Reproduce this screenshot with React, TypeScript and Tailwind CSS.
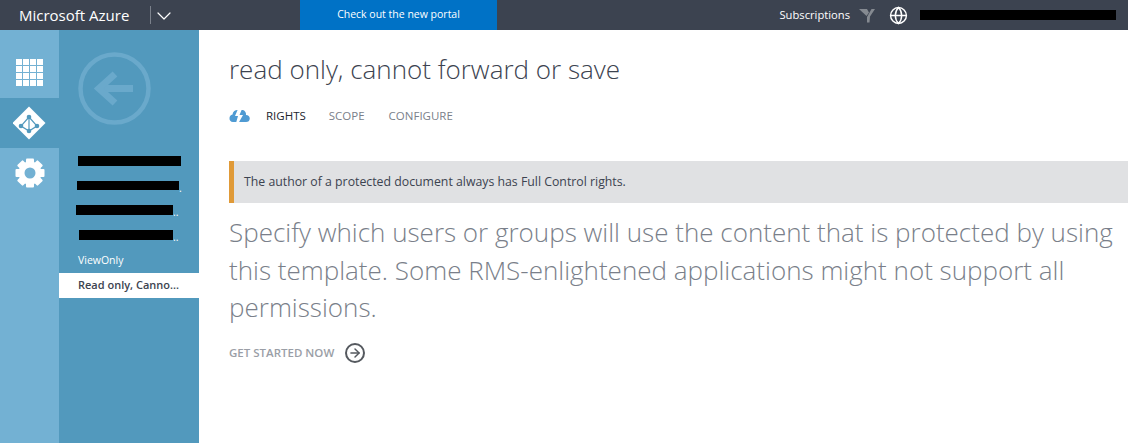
import { ArrowRight, ChevronDown, Globe } from 'lucide-react';

const font = "font-['Open_Sans','Noto_Sans',sans-serif]";

function TilesIcon() {
  return (
    <div className="grid grid-cols-4 gap-[1px] w-[27px] h-[27px]">
      {Array.from({ length: 16 }).map((_, i) => (
        <div key={i} className="bg-white" />
      ))}
    </div>
  );
}

function DirectoryIcon() {
  return (
    <svg width="34" height="34" viewBox="0 0 34 34">
      <path d="M16 0.500L32.500 17L16 33.500L-0.500 17Z" fill="#fff" />
      <g stroke="#5299bd" strokeWidth="1.200" fill="none">
        <path d="M16 11L16 25M16 11L8 20L16 25L24 20Z" />
      </g>
      <g fill="#5299bd">
        <circle cx="16" cy="11" r="2.300" />
        <circle cx="8" cy="20" r="2.300" />
        <circle cx="24" cy="20" r="2.300" />
        <circle cx="16" cy="25" r="2.300" />
      </g>
    </svg>
  );
}

function GearIcon() {
  const teeth = [0, 45, 90, 135, 180, 225, 270, 315];
  return (
    <svg width="30" height="30" viewBox="0 0 30 30">
      {teeth.map(a => (
        <rect key={a} x="11" y="0.500" width="8" height="7" rx="1" fill="#fff" transform={`rotate(${a} 15 15)`} />
      ))}
      <circle cx="15" cy="15" r="8.500" fill="none" stroke="#fff" strokeWidth="6" />
    </svg>
  );
}

function BackIcon() {
  return (
    <svg width="74" height="74" viewBox="0 0 74 74" fill="none" stroke="#6aa9cb">
      <circle cx="36.500" cy="36.500" r="34" strokeWidth="4.500" />
      <path d="M55 36.500H24" strokeWidth="7" />
      <path d="M37 22L21 36.500L37 51" strokeWidth="7" />
    </svg>
  );
}

function CloudIcon() {
  return (
    <svg width="21" height="14" viewBox="0 0 21 14">
      <path d="M4 13A3.800 3.800 0 0 1 0.500 9A3.800 3.800 0 0 1 3.500 5.500A5 5 0 0 1 9 1H14A5 5 0 0 1 17 6A3.800 3.800 0 0 1 20.800 9.500A3.800 3.800 0 0 1 17 13Z" fill="#4f9bd3" />
      <path d="M9 0L6 7H9L7 14H9.500L14 6H10.500L13 0Z" fill="#fff" />
    </svg>
  );
}

function FilterIcon() {
  return (
    <svg width="16" height="15" viewBox="0 0 16 15">
      <path d="M0 1H8L10 4.500L7.500 8Z" fill="#858a91" />
      <path d="M16 1L11 8.500L10.500 14.500H8L8 9L12.500 1Z" fill="#858a91" />
    </svg>
  );
}

function RedactedItem({ bar, pt, tail }: { bar: string; pt: string; tail?: string }) {
  return (
    <div className={`h-[25px] flex items-start text-white text-[10.500px] leading-[12px] ${pt}`}>
      <div className={`bg-black ${bar}`} />
      {tail && <span className="self-start mt-[1px] whitespace-nowrap">{tail}</span>}
    </div>
  );
}

export default function App() {
  return (
    <div className={`${font} w-[1128px] h-[443px] flex flex-col overflow-hidden bg-white`}>
      {/* top bar */}
      <div className="h-[30px] shrink-0 bg-[#3c4350] flex items-center text-white">
        <div className="w-[150px] pl-[19px] text-[15px] whitespace-nowrap">Microsoft Azure</div>
        <div className="w-[150px] flex items-center h-full">
          <div className="w-px h-[18px] bg-[#7b818b]" />
          <ChevronDown size={24} strokeWidth={1.200} className="ml-[1px] mt-[2px]" />
        </div>
        <div className="w-[197px] h-full bg-[#0072c6] flex items-center justify-center text-[10.500px] whitespace-nowrap">
          Check out the new portal
        </div>
        <div className="flex-1 flex items-center justify-end pr-[12px]">
          <span className="text-[11.200px] mr-[9px]">Subscriptions</span>
          <FilterIcon />
          <Globe size={19} strokeWidth={1.800} className="ml-[14px] mr-[12px]" />
          <div className="w-[196px] h-[10px] bg-black" />
        </div>
      </div>

      <div className="flex-1 flex min-h-0">
        {/* icon rail */}
        <div className="w-[59px] shrink-0 bg-[#73b1d3] flex flex-col">
          <div className="h-[68px] pt-[29px] flex justify-center">
            <TilesIcon />
          </div>
          <div className="h-[50px] bg-[#5299bd] flex items-center justify-center">
            <DirectoryIcon />
          </div>
          <div className="h-[50px] flex items-center justify-center">
            <GearIcon />
          </div>
        </div>

        {/* items panel */}
        <div className="w-[140px] shrink-0 bg-[#5299bd] flex flex-col">
          <div className="h-[118px] pt-[22px] pl-[19px]">
            <BackIcon />
          </div>
          <RedactedItem pt="pl-[19px] pt-[8px]" bar="w-[103px] h-[10px]" />
          <RedactedItem pt="pl-[18px] pt-[8px]" bar="w-[102px] h-[9px]" tail="." />
          <RedactedItem pt="pl-[17px] pt-[7px]" bar="w-[97px] h-[10px]" tail=".." />
          <RedactedItem pt="pl-[20px] pt-[7px]" bar="w-[94px] h-[10px]" tail=".." />
          <div className="h-[25px] pl-[19px] text-[10.500px] text-white flex items-center">ViewOnly</div>
          <div className="h-[25px] bg-white pl-[19px] flex items-center text-[11px] font-semibold text-[#3c4350] whitespace-nowrap">
            Read only, Canno...
          </div>
        </div>

        {/* content */}
        <div className="flex-1 min-w-0 pt-[22px]">
          <h1 className="pl-[30px] text-[26px] leading-[34px] font-light text-[#3c4350] whitespace-nowrap">
            read only, cannot forward or save
          </h1>
          <div className="pl-[30px] mt-[20px] h-[20px] flex items-center text-[11.500px] text-[#7a7f8a]">
            <CloudIcon />
            <span className="ml-[16px] text-[#22262e]">RIGHTS</span>
            <span className="ml-[23px]">SCOPE</span>
            <span className="ml-[24px]">CONFIGURE</span>
          </div>
          <div className="ml-[30px] mt-[35px] h-[42px] bg-[#e0e1e3] border-l-[5px] border-[#e09a38] pl-[10px] flex items-center text-[12.300px] text-[#3c4350]">
            The author of a protected document always has Full Control rights.
          </div>
          <p className="pl-[30px] pr-[8px] mt-[11px] text-[26px] leading-[37.500px] font-light text-[#7a7f8a]">
            Specify which users or groups will use the content that is protected by using this template. Some RMS-enlightened applications might not support all permissions.
          </p>
          <div className="pl-[30px] mt-[16px] flex items-center text-[11.500px] font-semibold text-[#9a9ea6]">
            GET STARTED NOW
            <span className="ml-[11px] w-[20px] h-[20px] rounded-full border-2 border-[#55595f] flex items-center justify-center">
              <ArrowRight size={14} strokeWidth={2.500} className="text-[#55595f]" />
            </span>
          </div>
        </div>
      </div>
    </div>
  );
}
